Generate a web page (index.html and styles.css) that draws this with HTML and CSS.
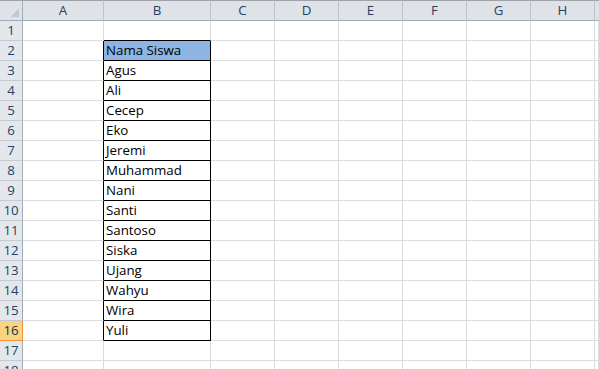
FILE: index.html
```html
<!DOCTYPE html>
<html>
<head>
<meta charset="utf-8">
<link rel="stylesheet" href="styles.css">
</head>
<body>
<div class="sheet">
  <div class="ch corner"></div><div class="ch">A</div><div class="ch">B</div><div class="ch">C</div><div class="ch">D</div><div class="ch">E</div><div class="ch">F</div><div class="ch">G</div><div class="ch">H</div><div class="ch last"></div>

  <div class="rh">1</div><div class="c"></div><div class="c top-edge"></div><div class="c"></div><div class="c"></div><div class="c"></div><div class="c"></div><div class="c"></div><div class="c"></div><div class="c"></div>
  <div class="rh">2</div><div class="c left-edge"></div><div class="c box head">Nama Siswa</div><div class="c"></div><div class="c"></div><div class="c"></div><div class="c"></div><div class="c"></div><div class="c"></div><div class="c"></div>
  <div class="rh">3</div><div class="c left-edge"></div><div class="c box">Agus</div><div class="c"></div><div class="c"></div><div class="c"></div><div class="c"></div><div class="c"></div><div class="c"></div><div class="c"></div>
  <div class="rh">4</div><div class="c left-edge"></div><div class="c box">Ali</div><div class="c"></div><div class="c"></div><div class="c"></div><div class="c"></div><div class="c"></div><div class="c"></div><div class="c"></div>
  <div class="rh">5</div><div class="c left-edge"></div><div class="c box">Cecep</div><div class="c"></div><div class="c"></div><div class="c"></div><div class="c"></div><div class="c"></div><div class="c"></div><div class="c"></div>
  <div class="rh">6</div><div class="c left-edge"></div><div class="c box">Eko</div><div class="c"></div><div class="c"></div><div class="c"></div><div class="c"></div><div class="c"></div><div class="c"></div><div class="c"></div>
  <div class="rh">7</div><div class="c left-edge"></div><div class="c box">Jeremi</div><div class="c"></div><div class="c"></div><div class="c"></div><div class="c"></div><div class="c"></div><div class="c"></div><div class="c"></div>
  <div class="rh">8</div><div class="c left-edge"></div><div class="c box">Muhammad</div><div class="c"></div><div class="c"></div><div class="c"></div><div class="c"></div><div class="c"></div><div class="c"></div><div class="c"></div>
  <div class="rh">9</div><div class="c left-edge"></div><div class="c box">Nani</div><div class="c"></div><div class="c"></div><div class="c"></div><div class="c"></div><div class="c"></div><div class="c"></div><div class="c"></div>
  <div class="rh">10</div><div class="c left-edge"></div><div class="c box">Santi</div><div class="c"></div><div class="c"></div><div class="c"></div><div class="c"></div><div class="c"></div><div class="c"></div><div class="c"></div>
  <div class="rh">11</div><div class="c left-edge"></div><div class="c box">Santoso</div><div class="c"></div><div class="c"></div><div class="c"></div><div class="c"></div><div class="c"></div><div class="c"></div><div class="c"></div>
  <div class="rh">12</div><div class="c left-edge"></div><div class="c box">Siska</div><div class="c"></div><div class="c"></div><div class="c"></div><div class="c"></div><div class="c"></div><div class="c"></div><div class="c"></div>
  <div class="rh">13</div><div class="c left-edge"></div><div class="c box">Ujang</div><div class="c"></div><div class="c"></div><div class="c"></div><div class="c"></div><div class="c"></div><div class="c"></div><div class="c"></div>
  <div class="rh">14</div><div class="c left-edge"></div><div class="c box">Wahyu</div><div class="c"></div><div class="c"></div><div class="c"></div><div class="c"></div><div class="c"></div><div class="c"></div><div class="c"></div>
  <div class="rh">15</div><div class="c left-edge"></div><div class="c box">Wira</div><div class="c"></div><div class="c"></div><div class="c"></div><div class="c"></div><div class="c"></div><div class="c"></div><div class="c"></div>
  <div class="rh active">16</div><div class="c left-edge"></div><div class="c box">Yuli</div><div class="c"></div><div class="c"></div><div class="c"></div><div class="c"></div><div class="c"></div><div class="c"></div><div class="c"></div>
  <div class="rh">17</div><div class="c"></div><div class="c"></div><div class="c"></div><div class="c"></div><div class="c"></div><div class="c"></div><div class="c"></div><div class="c"></div><div class="c"></div>
  <div class="rh">18</div><div class="c"></div><div class="c"></div><div class="c"></div><div class="c"></div><div class="c"></div><div class="c"></div><div class="c"></div><div class="c"></div><div class="c"></div>
</div>
</body>
</html>
```

FILE: styles.css
```css
html, body {
  margin: 0;
  padding: 0;
  background: #ffffff;
  overflow: hidden;
}

.sheet {
  display: grid;
  grid-template-columns: 23px 81px 107px 64px 64px 64px 64px 64px 64px 4px;
  grid-template-rows: 21px repeat(18, 20px);
  font-family: "Open Sans", "Noto Sans", sans-serif;
  font-size: 13.3px;
  color: #000000;
  width: 599px;
  overflow: hidden;
}

.ch {
  box-sizing: border-box;
  background: #dfe3e8;
  border-top: 1px solid #9ea3a9;
  border-right: 1px solid #bfc4ca;
  border-bottom: 1px solid #9eabb8;
  color: #27415f;
  display: flex;
  align-items: center;
  justify-content: center;
  line-height: 1;
  padding-top: 1px;
}

.ch.last {
  border-right: none;
}

.corner {
  border-right-color: #9eabb8;
  background:
    linear-gradient(135deg, transparent 0 62%, #c3c8ce 62% 100%) no-repeat right 3px bottom 3px / 11px 11px,
    #dfe3e8;
}

.rh {
  box-sizing: border-box;
  background: #e4e8ed;
  border-right: 1px solid #9eabb8;
  border-bottom: 1px solid #c5cad0;
  color: #27415f;
  display: flex;
  align-items: center;
  justify-content: center;
  line-height: 1;
  padding-top: 1px;
}

.rh.active {
  background: #f9d582;
  border-right-color: #f29436;
  border-bottom-color: #f29436;
  color: #1f2f45;
}

.c {
  box-sizing: border-box;
  border-right: 1px solid #dadcdd;
  border-bottom: 1px solid #dadcdd;
  display: flex;
  align-items: flex-end;
  padding: 0 0 1px 2px;
  line-height: 17px;
  white-space: nowrap;
}

.top-edge {
  border-bottom-color: #000000;
}

.left-edge {
  border-right-color: #000000;
}

.box {
  border-right-color: #000000;
  border-bottom-color: #000000;
}

.head {
  background: #8db4e2;
}
```
